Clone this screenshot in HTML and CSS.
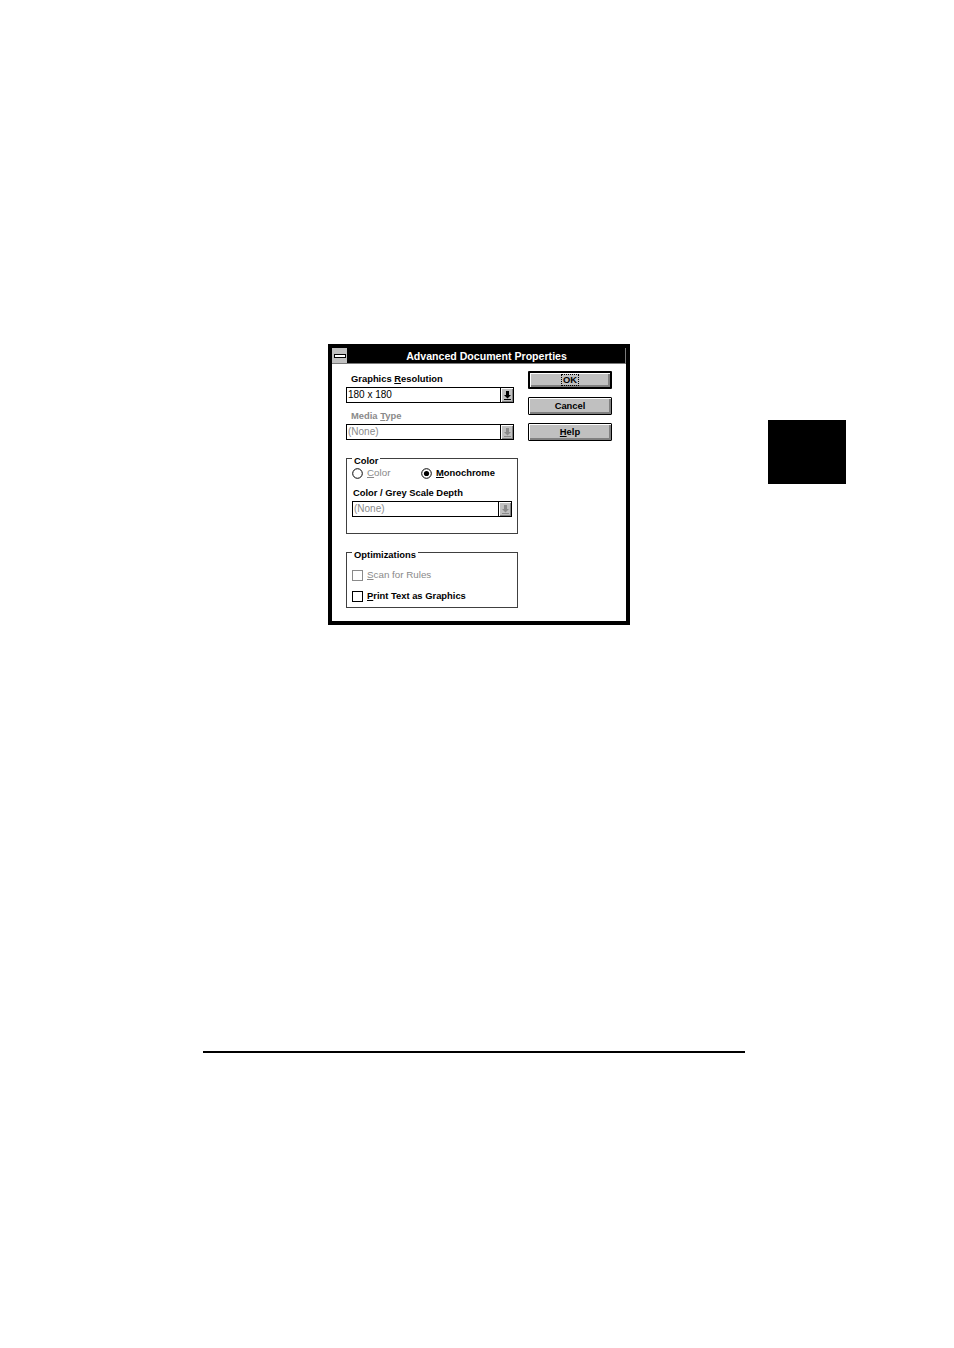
FILE: index.html
```html
<!DOCTYPE html>
<html>
<head>
<meta charset="utf-8">
<link rel="stylesheet" href="styles.css">
</head>
<body>
<div class="page">
  <div class="top-row">
    <div class="dialog">
      <div class="titlebar">
        <div class="sysbox"><span class="dash"></span></div>
        <div class="title">Advanced Document Properties</div>
      </div>
      <div class="content">
        <div class="left">
          <div class="lbl first">Graphics <u>R</u>esolution</div>
          <div class="combo">
            <span class="ctext">180 x 180</span>
            <span class="cbtn"><svg width="7" height="9" viewBox="0 0 7 9"><rect x="2" y="0" width="3" height="4" fill="#000"/><polygon points="0,4 7,4 3.5,7.5" fill="#000"/><rect x="0" y="8" width="7" height="1" fill="#000"/></svg></span>
          </div>
          <div class="lbl second disabled">Media <u>T</u>ype</div>
          <div class="combo">
            <span class="ctext disabled">(None)</span>
            <span class="cbtn"><svg width="7" height="9" viewBox="0 0 7 9"><rect x="2" y="0" width="3" height="4" fill="#8a8a8a"/><polygon points="0,4 7,4 3.5,7.5" fill="#8a8a8a"/><rect x="0" y="8" width="7" height="1" fill="#8a8a8a"/></svg></span>
          </div>

          <div class="group g1">
            <div class="legend">Color</div>
            <div class="radios">
              <div class="opt first-opt">
                <svg class="radio" width="11" height="11" viewBox="0 0 11 11"><circle cx="5.5" cy="5.5" r="4.8" fill="#fff" stroke="#000" stroke-width="1"/></svg>
                <span class="otext disabled plain"><u>C</u>olor</span>
              </div>
              <div class="opt">
                <svg class="radio" width="11" height="11" viewBox="0 0 11 11"><circle cx="5.5" cy="5.5" r="4.8" fill="#fff" stroke="#000" stroke-width="1"/><circle cx="5.5" cy="5.5" r="2.6" fill="#000"/></svg>
                <span class="otext"><u>M</u>onochrome</span>
              </div>
            </div>
            <div class="lbl depth">Color / Grey Scale Depth</div>
            <div class="combo small">
              <span class="ctext disabled">(None)</span>
              <span class="cbtn"><svg width="7" height="9" viewBox="0 0 7 9"><rect x="2" y="0" width="3" height="4" fill="#8a8a8a"/><polygon points="0,4 7,4 3.5,7.5" fill="#8a8a8a"/><rect x="0" y="8" width="7" height="1" fill="#8a8a8a"/></svg></span>
            </div>
          </div>

          <div class="group g2">
            <div class="legend">Optimizations</div>
            <div class="check c1">
              <span class="box dis"></span>
              <span class="otext disabled plain"><u>S</u>can for Rules</span>
            </div>
            <div class="check c2">
              <span class="box"></span>
              <span class="otext"><u>P</u>rint Text as Graphics</span>
            </div>
          </div>
        </div>
        <div class="right">
          <div class="btn default"><span class="focus">OK</span></div>
          <div class="btn">Cancel</div>
          <div class="btn"><span><u>H</u>elp</span></div>
        </div>
      </div>
    </div>
    <div class="tab"></div>
  </div>
  <div class="rule"></div>
</div>
</body>
</html>
```
FILE: styles.css
```css
html, body {
  margin: 0;
  padding: 0;
  background: #fff;
}
.page {
  width: 954px;
  height: 1348px;
  font-family: "Liberation Sans", Arial, sans-serif;
  color: #000;
}
.top-row {
  display: flex;
  align-items: flex-start;
  padding-top: 344px;
  padding-left: 328px;
}
.dialog {
  box-sizing: border-box;
  width: 302px;
  height: 281px;
  border: 4px solid #000;
  background: #fff;
}
.titlebar {
  display: flex;
  height: 16px;
  background: #000;
  box-shadow: inset -1px -1px 0 #7a7a7a;
}
.sysbox {
  width: 15px;
  height: 15px;
  background: #c0c0c0;
  display: flex;
  align-items: center;
  justify-content: center;
}
.dash {
  display: block;
  width: 10px;
  height: 2px;
  background: #fff;
  border: 1px solid #000;
}
.title {
  flex: 1;
  color: #fff;
  font-weight: bold;
  font-size: 10.6px;
  line-height: 16px;
  text-align: center;
}
.content {
  display: flex;
  gap: 10px;
  padding: 7px 0 0 14px;
}
.left {
  width: 172px;
  display: flex;
  flex-direction: column;
}
.lbl {
  font-weight: bold;
  font-size: 9.4px;
  line-height: 12px;
  height: 12px;
  padding-left: 5px;
  white-space: nowrap;
}
.lbl.first { margin-top: 2px; }
.lbl.second { margin-top: 7px; }
.disabled { color: #8a8a8a; }
.combo {
  box-sizing: border-box;
  margin-top: 2px;
  width: 168px;
  height: 16px;
  border: 1px solid #000;
  display: flex;
  background: #fff;
}
.combo.small {
  width: 160px;
  margin-top: 2px;
}
.ctext {
  flex: 1;
  font-size: 10px;
  line-height: 14px;
  padding-left: 1px;
  white-space: nowrap;
}
.cbtn {
  box-sizing: border-box;
  width: 13px;
  height: 14px;
  border-left: 1px solid #000;
  background: #c0c0c0;
  box-shadow: inset 1px 1px 0 #fff, inset -1px -1px 0 #808080;
  display: flex;
  align-items: center;
  justify-content: center;
}
.group {
  box-sizing: border-box;
  border: 1px solid #404040;
  display: flex;
  flex-direction: column;
  padding-left: 5px;
}
.g1 {
  margin-top: 18px;
  height: 76px;
}
.g2 {
  margin-top: 18px;
  height: 56px;
}
.legend {
  align-self: flex-start;
  margin-top: -3px;
  padding: 0 2px;
  background: #fff;
  font-weight: bold;
  font-size: 9.4px;
  line-height: 10px;
  height: 10px;
}
.radios {
  display: flex;
  margin-top: 1px;
  height: 12px;
  align-items: center;
}
.opt {
  display: flex;
  align-items: center;
}
.first-opt { width: 69px; }
.radio { display: block; }
.otext {
  margin-left: 4px;
  font-weight: bold;
  font-size: 9.4px;
  line-height: 12px;
  white-space: nowrap;
}
.otext.plain { font-weight: normal; font-size: 9.8px; }
.lbl.depth {
  margin-top: 8px;
  padding-left: 1px;
}
.check {
  display: flex;
  align-items: center;
  height: 12px;
}
.c1 { margin-top: 9px; }
.c2 { margin-top: 9px; }
.box {
  box-sizing: border-box;
  width: 11px;
  height: 11px;
  border: 1px solid #000;
  background: #fff;
}
.box.dis { border-color: #8a8a8a; }
.right {
  width: 84px;
  display: flex;
  flex-direction: column;
  gap: 8px;
}
.btn {
  box-sizing: border-box;
  height: 18px;
  border: 1px solid #000;
  border-radius: 1px;
  background: #c0c0c0;
  box-shadow: inset 1px 1px 0 #fff, inset -2px -2px 0 #808080;
  display: flex;
  align-items: center;
  justify-content: center;
  font-weight: bold;
  font-size: 9.4px;
  line-height: 12px;
}
.btn.default {
  border-width: 2px;
}
.focus {
  border: 1px dotted #000;
  padding: 0 1px;
  line-height: 10px;
}
.tab {
  width: 78px;
  height: 64px;
  margin-top: 76px;
  margin-left: 138px;
  background: #000;
}
.rule {
  margin-top: 426px;
  margin-left: 203px;
  width: 542px;
  height: 1.5px;
  background: #000;
}
```
